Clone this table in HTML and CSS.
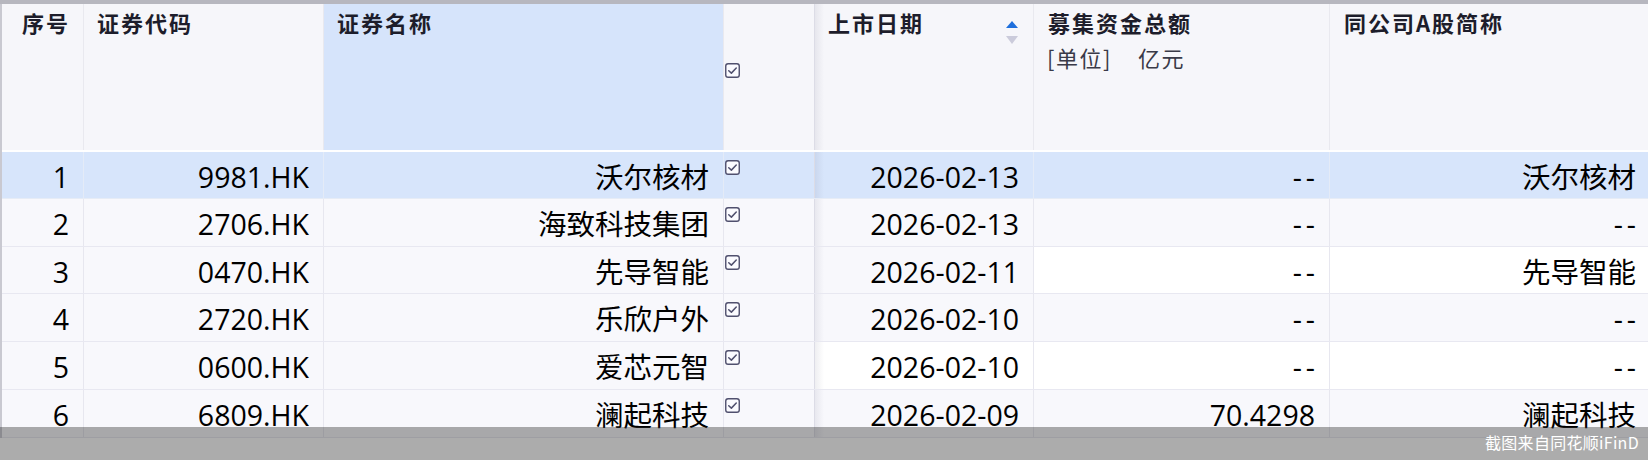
FILE: index.html
```html
<!DOCTYPE html>
<html lang="zh-CN">
<head>
<meta charset="utf-8">
<title>新股列表</title>
<link rel="stylesheet" href="styles.css">
</head>
<body>
<div class="page">
  <div class="topstrip"></div>
  <div class="table">
    <div class="row head">
      <div class="cell h c1">序号</div>
      <div class="cell h c2">证券代码</div>
      <div class="cell h c3 sel">证券名称</div>
      <div class="cell h c4 chk-head">
        <svg class="cb big" viewBox="0 0 16 16"><rect x="0.8" y="0.8" width="14.4" height="14.4" rx="2.5" fill="#fbfbff" stroke="#50506e" stroke-width="1.5"/><path d="M4 8.2 L6.8 10.8 L12 5.4" fill="none" stroke="#50506e" stroke-width="1.6" stroke-linecap="round" stroke-linejoin="round"/></svg>
      </div>
      <div class="cell h c5 frz">
        <span>上市日期</span>
        <svg class="sort" viewBox="0 0 12 24"><path d="M0 7 L6 0 L12 7 Z" fill="#1f6fdc"/><path d="M0 15 L12 15 L6 23 Z" fill="#cbcbdb"/></svg>
      </div>
      <div class="cell h c6">
        <div>募集资金总额</div>
        <div class="unit">[单位]<span class="gap"></span>亿元</div>
      </div>
      <div class="cell h c7">同公司A股简称</div>
    </div>

    <div class="row r1 selrow">
      <div class="cell c1">1</div><div class="cell c2">9981.HK</div><div class="cell c3">沃尔核材</div>
      <div class="cell c4"><svg class="cb" viewBox="0 0 16 16"><rect x="0.8" y="0.8" width="14.4" height="14.4" rx="2.5" fill="#fbfbff" stroke="#50506e" stroke-width="1.5"/><path d="M4 8.2 L6.8 10.8 L12 5.4" fill="none" stroke="#50506e" stroke-width="1.6" stroke-linecap="round" stroke-linejoin="round"/></svg></div>
      <div class="cell c5 frz">2026-02-13</div><div class="cell c6"><span class="dash">--</span></div><div class="cell c7">沃尔核材</div>
    </div>
    <div class="row r2 alt">
      <div class="cell c1">2</div><div class="cell c2">2706.HK</div><div class="cell c3">海致科技集团</div>
      <div class="cell c4"><svg class="cb" viewBox="0 0 16 16"><rect x="0.8" y="0.8" width="14.4" height="14.4" rx="2.5" fill="#fbfbff" stroke="#50506e" stroke-width="1.5"/><path d="M4 8.2 L6.8 10.8 L12 5.4" fill="none" stroke="#50506e" stroke-width="1.6" stroke-linecap="round" stroke-linejoin="round"/></svg></div>
      <div class="cell c5 frz">2026-02-13</div><div class="cell c6"><span class="dash">--</span></div><div class="cell c7"><span class="dash">--</span></div>
    </div>
    <div class="row r3 plain">
      <div class="cell c1">3</div><div class="cell c2">0470.HK</div><div class="cell c3">先导智能</div>
      <div class="cell c4"><svg class="cb" viewBox="0 0 16 16"><rect x="0.8" y="0.8" width="14.4" height="14.4" rx="2.5" fill="#fbfbff" stroke="#50506e" stroke-width="1.5"/><path d="M4 8.2 L6.8 10.8 L12 5.4" fill="none" stroke="#50506e" stroke-width="1.6" stroke-linecap="round" stroke-linejoin="round"/></svg></div>
      <div class="cell c5 frz">2026-02-11</div><div class="cell c6"><span class="dash">--</span></div><div class="cell c7">先导智能</div>
    </div>
    <div class="row r4 alt">
      <div class="cell c1">4</div><div class="cell c2">2720.HK</div><div class="cell c3">乐欣户外</div>
      <div class="cell c4"><svg class="cb" viewBox="0 0 16 16"><rect x="0.8" y="0.8" width="14.4" height="14.4" rx="2.5" fill="#fbfbff" stroke="#50506e" stroke-width="1.5"/><path d="M4 8.2 L6.8 10.8 L12 5.4" fill="none" stroke="#50506e" stroke-width="1.6" stroke-linecap="round" stroke-linejoin="round"/></svg></div>
      <div class="cell c5 frz">2026-02-10</div><div class="cell c6"><span class="dash">--</span></div><div class="cell c7"><span class="dash">--</span></div>
    </div>
    <div class="row r5 plain">
      <div class="cell c1">5</div><div class="cell c2">0600.HK</div><div class="cell c3">爱芯元智</div>
      <div class="cell c4"><svg class="cb" viewBox="0 0 16 16"><rect x="0.8" y="0.8" width="14.4" height="14.4" rx="2.5" fill="#fbfbff" stroke="#50506e" stroke-width="1.5"/><path d="M4 8.2 L6.8 10.8 L12 5.4" fill="none" stroke="#50506e" stroke-width="1.6" stroke-linecap="round" stroke-linejoin="round"/></svg></div>
      <div class="cell c5 frz">2026-02-10</div><div class="cell c6"><span class="dash">--</span></div><div class="cell c7"><span class="dash">--</span></div>
    </div>
    <div class="row r6 alt">
      <div class="cell c1">6</div><div class="cell c2">6809.HK</div><div class="cell c3">澜起科技</div>
      <div class="cell c4"><svg class="cb" viewBox="0 0 16 16"><rect x="0.8" y="0.8" width="14.4" height="14.4" rx="2.5" fill="#fbfbff" stroke="#50506e" stroke-width="1.5"/><path d="M4 8.2 L6.8 10.8 L12 5.4" fill="none" stroke="#50506e" stroke-width="1.6" stroke-linecap="round" stroke-linejoin="round"/></svg></div>
      <div class="cell c5 frz">2026-02-09</div><div class="cell c6">70.4298</div><div class="cell c7">澜起科技</div>
    </div>
  </div>
  <div class="watermark">截图来自同花顺iFinD</div>
</div>
</body>
</html>
```

FILE: styles.css
```css
* { box-sizing: border-box; }
html, body {
  margin: 0;
  padding: 0;
  width: 1648px;
  height: 460px;
  overflow: hidden;
  background: #ffffff;
}
.page {
  position: relative;
  width: 1648px;
  height: 460px;
  overflow: hidden;
  font-family: "Open Sans", "Noto Sans CJK SC", sans-serif;
  color: #000;
}
.topstrip {
  height: 4px;
  background: #b7b7bf;
}
.table {
  border-left: 2px solid #c9c9d1;
  width: 1650px;
}
.row {
  display: grid;
  grid-template-columns: 82px 240px 400px 90px 220px 296px 320px;
  height: 48px;
  border-bottom: 1px solid #e8e8f1;
}
.row.r1 { height: 47px; }
.row.r3 { height: 47px; }
.cell {
  border-right: 1px solid #e7e7ef;
  font-size: 28.5px;
  line-height: 44px;
  padding: 3px 14px 0 0;
  text-align: right;
  white-space: nowrap;
  overflow: hidden;
}
.cell.c7 { padding-right: 13px; }
.dash {
  letter-spacing: 4px;
  margin-right: -4px;
}

/* header */
.row.head {
  height: 148px;
  border-bottom: 2px solid #ffffff;
  background: #f6f6fa;
}
.cell.h {
  text-align: left;
  font-family: "Noto Sans CJK SC", sans-serif;
  font-weight: 700;
  font-size: 22px;
  letter-spacing: 2px;
  line-height: 35px;
  padding: 1px 0 0 13px;
  color: #1d1d2b;
  border-right-color: #e9e9ef;
}
.cell.h.c1 { padding-left: 20px; }
.cell.h.c6, .cell.h.c7 { padding-left: 14px; }
.cell.h.sel { background: #d6e4fb; }
.cell.h .unit {
  font-weight: 400;
  color: #3a3a48;
  letter-spacing: 1.5px;
  margin-left: -1px;
}
.unit .gap {
  display: inline-block;
  width: 26px;
}
.cell.h.c5 {
  display: flex;
  justify-content: space-between;
  align-items: flex-start;
  padding-right: 15px;
}
.sort {
  width: 12px;
  height: 24px;
  margin-top: 16px;
}
.cell.h.chk-head {
  display: flex;
  align-items: flex-start;
  padding: 59px 0 0 1px;
}
.cb {
  width: 16px;
  height: 16px;
  display: block;
}
.cell.c4 {
  padding: 8px 0 0 1px;
  text-align: left;
}
.cell.c4 .cb { width: 15px; height: 15px; }

/* frozen columns divider shadow */
.frz {
  border-left: 1px solid #dcdce6;
  background-image: linear-gradient(to right, rgba(90, 90, 120, 0.10), rgba(90, 90, 120, 0) 9px);
}
.cell.c4 { border-right: 0; }

/* row backgrounds */
.selrow { background: #d7e5fb; border-bottom-color: #e6ecf6; }
.selrow .cell { border-right-color: #e4ebf7; }
.alt { background: #f8f8fc; }
.plain .c1, .plain .c2, .plain .c3, .plain .c4 { background: #f8f8fc; }
.plain .c5, .plain .c6, .plain .c7 { background-color: #ffffff; }
.r3 .c5 { background-color: #f8f8fc; }

.watermark {
  position: absolute;
  left: 0;
  right: 0;
  bottom: 0;
  height: 33px;
  background: rgba(48, 48, 48, 0.4);
  color: #ffffff;
  font-family: "Noto Sans CJK SC", sans-serif;
  font-size: 16px;
  line-height: 31px;
  text-align: right;
  padding: 0 9px 0 0;
  letter-spacing: 0.3px;
}
```
